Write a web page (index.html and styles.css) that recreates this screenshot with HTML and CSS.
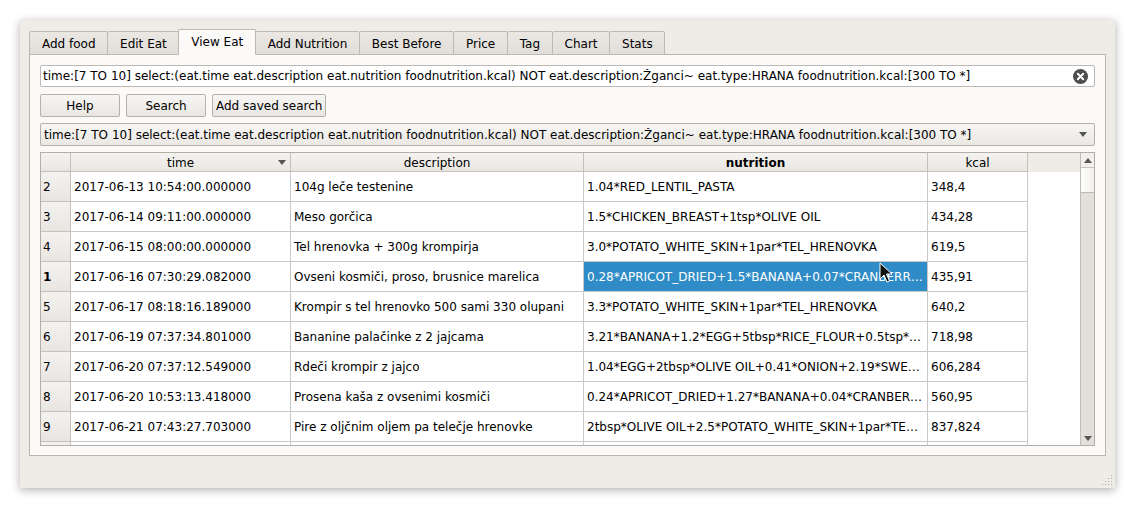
FILE: index.html
```html
<!DOCTYPE html>
<html>
<head>
<meta charset="utf-8">
<link rel="stylesheet" href="styles.css">
</head>
<body>
<div class="stage">
  <div class="window">
    <div class="tabbar">
      <div class="tab">Add food</div>
      <div class="tab">Edit Eat</div>
      <div class="tab active">View Eat</div>
      <div class="tab">Add Nutrition</div>
      <div class="tab">Best Before</div>
      <div class="tab">Price</div>
      <div class="tab">Tag</div>
      <div class="tab">Chart</div>
      <div class="tab">Stats</div>
    </div>
    <div class="panel">
      <div class="lineedit">
        <span class="le-text">time:[7 TO 10] select:(eat.time eat.description eat.nutrition foodnutrition.kcal) NOT eat.description:Žganci~ eat.type:HRANA foodnutrition.kcal:[300 TO *]</span>
        <svg class="clear" width="15" height="15" viewBox="0 0 15 15"><circle cx="7.5" cy="7.5" r="7.5" fill="#4d4d4d"/><path d="M4.8 4.8 L10.2 10.2 M10.2 4.8 L4.8 10.2" stroke="#fff" stroke-width="2" stroke-linecap="round"/></svg>
      </div>
      <div class="buttons">
        <div class="btn">Help</div>
        <div class="btn">Search</div>
        <div class="btn">Add saved search</div>
      </div>
      <div class="combo">
        <span class="combo-text">time:[7 TO 10] select:(eat.time eat.description eat.nutrition foodnutrition.kcal) NOT eat.description:Žganci~ eat.type:HRANA foodnutrition.kcal:[300 TO *]</span>
        <svg class="arrow" width="8" height="5" viewBox="0 0 8 5"><path d="M0 0 H8 L4 5 Z" fill="#555"/></svg>
      </div>
      <div class="table">
        <div class="view">
          <div class="hrow">
            <div class="corner"></div>
            <div class="hcell c-time"><span class="hlabel">time</span><svg class="sort" width="8" height="5" viewBox="0 0 8 5"><path d="M0 0 H8 L4 5 Z" fill="#555"/></svg></div>
            <div class="hcell c-desc">description</div>
            <div class="hcell c-nutr bold">nutrition</div>
            <div class="hcell c-kcal">kcal</div>
            <div class="hfill"></div>
          </div>
          <div class="row"><div class="vh">2</div><div class="cell c-time">2017-06-13 10:54:00.000000</div><div class="cell c-desc">104g leče testenine</div><div class="cell c-nutr">1.04*RED_LENTIL_PASTA</div><div class="cell c-kcal">348,4</div><div class="fill"></div></div>
          <div class="row"><div class="vh">3</div><div class="cell c-time">2017-06-14 09:11:00.000000</div><div class="cell c-desc">Meso gorčica</div><div class="cell c-nutr">1.5*CHICKEN_BREAST+1tsp*OLIVE OIL</div><div class="cell c-kcal">434,28</div><div class="fill"></div></div>
          <div class="row"><div class="vh">4</div><div class="cell c-time">2017-06-15 08:00:00.000000</div><div class="cell c-desc">Tel hrenovka + 300g krompirja</div><div class="cell c-nutr">3.0*POTATO_WHITE_SKIN+1par*TEL_HRENOVKA</div><div class="cell c-kcal">619,5</div><div class="fill"></div></div>
          <div class="row"><div class="vh bold">1</div><div class="cell c-time">2017-06-16 07:30:29.082000</div><div class="cell c-desc">Ovseni kosmiči, proso, brusnice marelica</div><div class="cell c-nutr selected">0.28*APRICOT_DRIED+1.5*BANANA+0.07*CRANBERR…</div><div class="cell c-kcal">435,91</div><div class="fill"></div></div>
          <div class="row"><div class="vh">5</div><div class="cell c-time">2017-06-17 08:18:16.189000</div><div class="cell c-desc">Krompir s tel hrenovko 500 sami 330 olupani</div><div class="cell c-nutr">3.3*POTATO_WHITE_SKIN+1par*TEL_HRENOVKA</div><div class="cell c-kcal">640,2</div><div class="fill"></div></div>
          <div class="row"><div class="vh">6</div><div class="cell c-time">2017-06-19 07:37:34.801000</div><div class="cell c-desc">Bananine palačinke z 2 jajcama</div><div class="cell c-nutr">3.21*BANANA+1.2*EGG+5tbsp*RICE_FLOUR+0.5tsp*…</div><div class="cell c-kcal">718,98</div><div class="fill"></div></div>
          <div class="row"><div class="vh">7</div><div class="cell c-time">2017-06-20 07:37:12.549000</div><div class="cell c-desc">Rdeči krompir z jajco</div><div class="cell c-nutr">1.04*EGG+2tbsp*OLIVE OIL+0.41*ONION+2.19*SWE…</div><div class="cell c-kcal">606,284</div><div class="fill"></div></div>
          <div class="row"><div class="vh">8</div><div class="cell c-time">2017-06-20 10:53:13.418000</div><div class="cell c-desc">Prosena kaša z ovsenimi kosmiči</div><div class="cell c-nutr">0.24*APRICOT_DRIED+1.27*BANANA+0.04*CRANBER…</div><div class="cell c-kcal">560,95</div><div class="fill"></div></div>
          <div class="row"><div class="vh">9</div><div class="cell c-time">2017-06-21 07:43:27.703000</div><div class="cell c-desc">Pire z oljčnim oljem pa telečje hrenovke</div><div class="cell c-nutr">2tbsp*OLIVE OIL+2.5*POTATO_WHITE_SKIN+1par*TE…</div><div class="cell c-kcal">837,824</div><div class="fill"></div></div>
          <div class="row"><div class="vh"></div><div class="cell c-time"></div><div class="cell c-desc"></div><div class="cell c-nutr"></div><div class="cell c-kcal"></div><div class="fill"></div></div>
        </div>
        <div class="vscroll">
          <div class="sbtn"><svg width="8" height="5" viewBox="0 0 8 5"><path d="M0 5 H8 L4 0 Z" fill="#555"/></svg></div>
          <div class="handle"></div>
          <div class="track"></div>
          <div class="sbtn"><svg width="8" height="5" viewBox="0 0 8 5"><path d="M0 0 H8 L4 5 Z" fill="#555"/></svg></div>
        </div>
      </div>
    </div>
    <svg class="grip" width="12" height="12" viewBox="0 0 12 12">
      <rect x="10" y="1" width="1" height="1" fill="#b0aca7"/>
      <rect x="7" y="4" width="1" height="1" fill="#b0aca7"/><rect x="10" y="4" width="1" height="1" fill="#b0aca7"/>
      <rect x="4" y="7" width="1" height="1" fill="#b0aca7"/><rect x="7" y="7" width="1" height="1" fill="#b0aca7"/><rect x="10" y="7" width="1" height="1" fill="#b0aca7"/>
      <rect x="1" y="10" width="1" height="1" fill="#b0aca7"/><rect x="4" y="10" width="1" height="1" fill="#b0aca7"/><rect x="7" y="10" width="1" height="1" fill="#b0aca7"/><rect x="10" y="10" width="1" height="1" fill="#b0aca7"/>
    </svg>
  </div>
  <svg class="cursor" width="14" height="22" viewBox="0 0 14 22">
    <path d="M1 1 L1 17 L5 13 L8 20 L10.5 19 L7.5 12 L13 12 Z" fill="#111" stroke="#fff" stroke-width="1" stroke-linejoin="round"/>
  </svg>
</div>
</body>
</html>
```

FILE: styles.css
```css
html, body {
  margin: 0;
  padding: 0;
  background: #ffffff;
}
body {
  font-family: "DejaVu Sans", "Noto Sans", sans-serif;
  font-size: 12px;
  color: #000;
}
.stage {
  position: relative;
  padding: 20px;
  width: 1095px;
}
.window {
  position: relative;
  box-sizing: border-box;
  width: 1095px;
  height: 468px;
  background: #efebe7;
  padding: 9px 9px 0 9px;
  box-shadow: 0 2px 9px rgba(0, 0, 0, 0.32);
}
.tabbar {
  display: flex;
  align-items: flex-end;
  height: 26px;
  margin-bottom: -1px;
}
.tab {
  box-sizing: border-box;
  height: 24px;
  padding: 1px 11.5px 0 12px;
  margin-right: -1px;
  border: 1px solid #bdb8b2;
  border-radius: 2px 2px 0 0;
  background: linear-gradient(#ebe8e4, #e1ddd8);
  display: flex;
  align-items: center;
  white-space: nowrap;
}
.tab.active {
  position: relative;
  z-index: 1;
  height: 26px;
  padding-top: 0;
  padding-bottom: 1px;
  background: #fcfaf8;
  border-bottom-color: #fcfaf8;
}
.panel {
  box-sizing: border-box;
  height: 402px;
  border: 1px solid #bab5af;
  background: #fcfaf8;
  padding: 10px 10px 9px 10px;
  display: flex;
  flex-direction: column;
}
.lineedit {
  box-sizing: border-box;
  height: 22px;
  border: 1px solid #bcb8b3;
  border-radius: 2px;
  background: #ffffff;
  display: flex;
  align-items: center;
  padding: 0 6px 0 2px;
}
.le-text {
  flex: 1;
  white-space: nowrap;
  overflow: hidden;
}
.clear {
  display: block;
}
.buttons {
  display: flex;
  gap: 6px;
  margin-top: 7px;
  height: 23px;
}
.btn {
  box-sizing: border-box;
  min-width: 80px;
  height: 23px;
  padding: 0 3px;
  border: 1px solid #b6b1ab;
  border-radius: 2px;
  background: linear-gradient(#f7f6f4, #e9e6e2);
  display: flex;
  align-items: center;
  justify-content: center;
  white-space: nowrap;
}
.combo {
  box-sizing: border-box;
  margin-top: 6px;
  height: 23px;
  border: 1px solid #b6b1ab;
  border-radius: 2px;
  background: linear-gradient(#f7f6f4, #ebe8e4);
  display: flex;
  align-items: center;
  padding: 0 7px 0 3px;
}
.combo-text {
  flex: 1;
  white-space: nowrap;
  overflow: hidden;
}
.arrow {
  display: block;
}
.table {
  box-sizing: border-box;
  margin-top: 6px;
  height: 294px;
  border: 1px solid #b3aea8;
  background: #ffffff;
  display: flex;
}
.view {
  flex: 1;
  overflow: hidden;
  display: flex;
  flex-direction: column;
}
.hrow {
  display: flex;
  flex: none;
  height: 19px;
}
.corner, .hcell {
  box-sizing: border-box;
  height: 19px;
  border-right: 1px solid #c4c0ba;
  border-bottom: 1px solid #c4c0ba;
  background: linear-gradient(#f5f3f1, #e9e6e2);
}
.corner {
  width: 30px;
  flex: none;
}
.hcell {
  flex: none;
  display: flex;
  align-items: center;
  justify-content: center;
  white-space: nowrap;
  position: relative;
  padding-top: 1px;
}
.sort {
  position: absolute;
  right: 4px;
  top: 7px;
}
.hfill {
  flex: 1;
  height: 19px;
  background: #efebe7;
}
.bold {
  font-weight: bold;
}
.c-time { width: 220px; }
.c-desc { width: 293px; }
.c-nutr { width: 344px; }
.c-kcal { width: 100px; }
.row {
  display: flex;
  flex: none;
  height: 30px;
}
.vh {
  box-sizing: border-box;
  flex: none;
  width: 30px;
  height: 30px;
  padding-left: 2px;
  border-right: 1px solid #c4c0ba;
  border-bottom: 1px solid #c4c0ba;
  background: linear-gradient(#f4f2f0, #e8e5e1);
  display: flex;
  align-items: center;
}
.cell {
  box-sizing: border-box;
  flex: none;
  height: 30px;
  padding-left: 3px;
  border-right: 1px solid #c8c8c8;
  border-bottom: 1px solid #c8c8c8;
  display: flex;
  align-items: center;
  white-space: nowrap;
  overflow: hidden;
}
.cell.selected {
  background: #308cc6;
  color: #ffffff;
}
.fill {
  flex: 1;
}
.vscroll {
  box-sizing: border-box;
  flex: none;
  width: 14px;
  border-left: 1px solid #c0bcb6;
  display: flex;
  flex-direction: column;
  background: #e3e0dc;
}
.sbtn {
  flex: none;
  height: 14px;
  background: #f2f0ed;
  display: flex;
  align-items: center;
  justify-content: center;
}
.handle {
  flex: none;
  height: 26px;
  box-sizing: border-box;
  border-top: 1px solid #c6c2bc;
  border-bottom: 1px solid #bdb8b2;
  background: linear-gradient(90deg, #fdfdfc, #f1efec);
}
.track {
  flex: 1;
}
.vscroll .sbtn:last-child {
  background: #e3e0dc;
}
.grip {
  position: absolute;
  right: 2px;
  bottom: 2px;
}
.cursor {
  position: absolute;
  left: 879px;
  top: 262px;
}
```
